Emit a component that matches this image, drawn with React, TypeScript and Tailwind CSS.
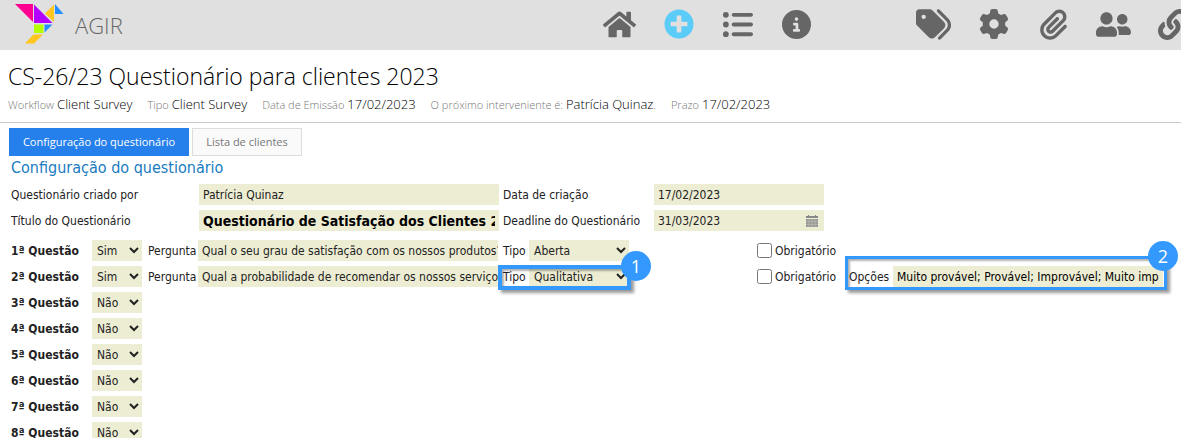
import type { ReactNode } from 'react';
import { FaHome, FaLink, FaPlusCircle, FaUserFriends } from 'react-icons/fa';
import { FaCircleInfo, FaGear, FaListUl, FaPaperclip, FaTags } from 'react-icons/fa6';

interface Question {
  id: number;
  active: 'Sim' | 'Não';
  text?: string;
  kind?: string;
  options?: string;
}

const questions: Question[] = [
  { id: 1, active: 'Sim', text: 'Qual o seu grau de satisfação com os nossos produtos?', kind: 'Aberta' },
  {
    id: 2,
    active: 'Sim',
    text: 'Qual a probabilidade de recomendar os nossos serviços?',
    kind: 'Qualitativa',
    options: 'Muito provável; Provável; Improvável; Muito improvável',
  },
  { id: 3, active: 'Não' },
  { id: 4, active: 'Não' },
  { id: 5, active: 'Não' },
  { id: 6, active: 'Não' },
  { id: 7, active: 'Não' },
  { id: 8, active: 'Não' },
];

const mainActions = [
  { label: 'Início', icon: <FaHome size={33} /> },
  { label: 'Novo', icon: <FaPlusCircle size={30} className="text-[#5bcbf8]" /> },
  { label: 'Lista', icon: <FaListUl size={31} /> },
  { label: 'Informação', icon: <FaCircleInfo size={29} /> },
];

const sideActions = [
  { label: 'Etiquetas', icon: <FaTags size={35} /> },
  { label: 'Definições', icon: <FaGear size={30} /> },
  { label: 'Anexos', icon: <FaPaperclip size={31} /> },
  { label: 'Utilizadores', icon: <FaUserFriends size={35} /> },
  { label: 'Ligações', icon: <FaLink size={31} /> },
];

const field = 'h-[21px] bg-[#ededd3] text-[#222]';

function Logo() {
  return (
    <svg width="50" height="42" viewBox="0 0 50 42" aria-hidden="true">
      <path d="M0 1H18V19Z" fill="#ff0090" />
      <path d="M19 1.5V20H37.5Z" fill="#b400ff" />
      <path d="M39 1.500V19L30 10.500Z" fill="#ffc61e" />
      <path d="M40 1V11H48.500Z" fill="#2490ff" />
      <path d="M19 21.500H28.500V30H19Z" fill="#b4ff00" />
      <path d="M29.500 21.500H37.500L29.500 29.500Z" fill="#2490ff" />
      <path d="M18.500 31.500H28L19 40.500H10Z" fill="#ffc61e" />
    </svg>
  );
}

function ActionGroup({ items, className }: { items: { label: string; icon: ReactNode }[]; className: string }) {
  return (
    <div className={`flex shrink-0 pb-0.5 ${className}`}>
      {items.map((item) => (
        <button key={item.label} type="button" aria-label={item.label} className="flex w-[35px] shrink-0 items-center justify-center">
          {item.icon}
        </button>
      ))}
    </div>
  );
}

function Meta({ label, value, end = '' }: { label: string; value: string; end?: string }) {
  return (
    <span className="flex items-baseline gap-[3px] whitespace-nowrap text-[11px] font-light text-[#777]">
      <span>{label}</span>
      <span>
        <span className="text-[13px] text-black">{value}</span>
        {end}
      </span>
    </span>
  );
}

function Callout({ n, className, badge }: { n: number; className: string; badge: string }) {
  return (
    <div className={`pointer-events-none absolute border-[#3399ff] shadow-[3px_3px_3px_rgba(0,0,0,0.4),inset_2px_2px_2px_rgba(0,0,0,0.3)] ${className}`}>
      <span className={`absolute flex size-[30px] items-center justify-center rounded-full bg-[#3399ff] font-['Open_Sans',sans-serif] text-lg text-white ${badge}`}>
        {n}
      </span>
    </div>
  );
}

function QuestionRow({ q }: { q: Question }) {
  return (
    <div className="flex h-[21px] items-center">
      <label htmlFor={`active-${q.id}`} className="w-[81px] shrink-0 font-bold">
        {q.id}ª Questão
      </label>
      <select id={`active-${q.id}`} defaultValue={q.active} className={`w-[50px] shrink-0 px-px ${field}`}>
        <option>Sim</option>
        <option>Não</option>
      </select>
      {q.text && (
        <>
          <label htmlFor={`text-${q.id}`} className="ml-1.5 w-[50px] shrink-0">
            Pergunta
          </label>
          <input id={`text-${q.id}`} type="text" defaultValue={q.text} className={`w-[300px] shrink-0 pl-1 ${field}`} />
          <div className="relative ml-[5px] flex w-[254px] shrink-0 items-center">
            <label htmlFor={`kind-${q.id}`} className="w-[26px]">
              Tipo
            </label>
            <select id={`kind-${q.id}`} defaultValue={q.kind} className={`w-[100px] px-px ${field}`}>
              <option>Aberta</option>
              <option>Qualitativa</option>
            </select>
            {q.options && <Callout n={1} className="-top-px -left-[5px] h-[25px] w-[133px] border-4" badge="-top-[18px] -right-6" />}
          </div>
          <label className="flex w-[92px] shrink-0 items-center gap-[3px]">
            <input type="checkbox" className="size-[15px]" />
            Obrigatório
          </label>
        </>
      )}
      {q.options && (
        <div className="relative flex items-center">
          <label htmlFor={`options-${q.id}`} className="w-11 shrink-0">
            Opções
          </label>
          <input id={`options-${q.id}`} type="text" defaultValue={q.options} className="h-[21px] w-[270px] bg-[#ededd3] px-1 text-black" />
          <Callout n={2} className="-top-[10px] -left-1 h-[34px] w-[322px] border-3" badge="-top-[18px] -right-[14px]" />
        </div>
      )}
    </div>
  );
}

export default function App() {
  return (
    <div className="h-screen overflow-hidden bg-white font-['Open_Sans','Noto_Sans',sans-serif]">
      <header className="flex h-[50px] overflow-hidden bg-[#e0e0e0] text-[#666]">
        <div className="flex w-[602px] shrink-0 items-center gap-[10px] pb-0.5 pl-[15px]">
          <Logo />
          <span className="pt-0.5 text-[22px] font-light">AGIR</span>
        </div>
        <ActionGroup items={mainActions} className="gap-6" />
        <div className="w-[102px] shrink-0" />
        <ActionGroup items={sideActions} className="gap-[25px]" />
      </header>

      <section className="border-b border-[#ccc] px-2 pt-2 pb-2">
        <h1 className="text-[23px] leading-9 font-light text-black">CS-26/23 Questionário para clientes 2023</h1>
        <div className="flex h-5 items-center gap-[15px] leading-5">
          <Meta label="Workflow" value="Client Survey" />
          <Meta label="Tipo" value="Client Survey" />
          <Meta label="Data de Emissão" value="17/02/2023" />
          <Meta label="O próximo interveniente é:" value="Patrícia Quinaz" end="." />
          <Meta label="Prazo" value="17/02/2023" />
        </div>
      </section>

      <nav className="flex gap-[3px] px-[9px] pt-[5px] text-[11px]">
        <button type="button" className="h-7 w-[180px] bg-[#2680eb] text-white">
          Configuração do questionário
        </button>
        <button type="button" className="h-7 w-[110px] border border-[#ddd] bg-[#fafafa] text-[#777]">
          Lista de clientes
        </button>
      </nav>

      <form className="px-[11px] font-['DejaVu_Sans_Condensed','DejaVu_Sans',sans-serif] text-xs text-[#222]">
        <h2 className="h-7 text-base leading-6 text-[#1a7bbf]">Configuração do questionário</h2>
        <div className="flex flex-col gap-[5px]">
          <div className="flex items-center">
            <label htmlFor="author" className="w-[188px] shrink-0">
              Questionário criado por
            </label>
            <input id="author" type="text" defaultValue="Patrícia Quinaz" className={`w-[300px] shrink-0 px-1 ${field}`} />
            <label htmlFor="created" className="ml-1 w-[151px] shrink-0">
              Data de criação
            </label>
            <input id="created" type="text" defaultValue="17/02/2023" className={`w-[170px] px-1 ${field}`} />
          </div>
          <div className="flex items-center">
            <label htmlFor="title" className="w-[188px] shrink-0">
              Título do Questionário
            </label>
            <input
              id="title"
              type="text"
              defaultValue="Questionário de Satisfação dos Clientes 2023"
              className="h-[21px] w-[300px] shrink-0 bg-[#ededd3] px-1 text-sm font-bold text-black"
            />
            <label htmlFor="deadline" className="ml-1 w-[151px] shrink-0">
              Deadline do Questionário
            </label>
            <div className={`flex w-[170px] items-center pr-1.5 ${field}`}>
              <input id="deadline" type="text" defaultValue="31/03/2023" className="min-w-0 flex-1 px-1" />
              <svg width="12" height="12" viewBox="0 0 12 12" aria-hidden="true">
                <path d="M0 1H2V0H3V1H9V0H10V1H12V3H0Z" fill="#888" />
                <path d="M0 4H12V12H0Z" fill="#999" />
                <path d="M0 6.500H12M0 9.500H12M3 4V12M6 4V12M9 4V12" stroke="#c4c4b4" strokeWidth="0.500" />
              </svg>
            </div>
          </div>
        </div>
        <div className="mt-[9px] flex flex-col gap-[5px]">
          {questions.map((q) => (
            <QuestionRow key={q.id} q={q} />
          ))}
        </div>
      </form>
    </div>
  );
}
